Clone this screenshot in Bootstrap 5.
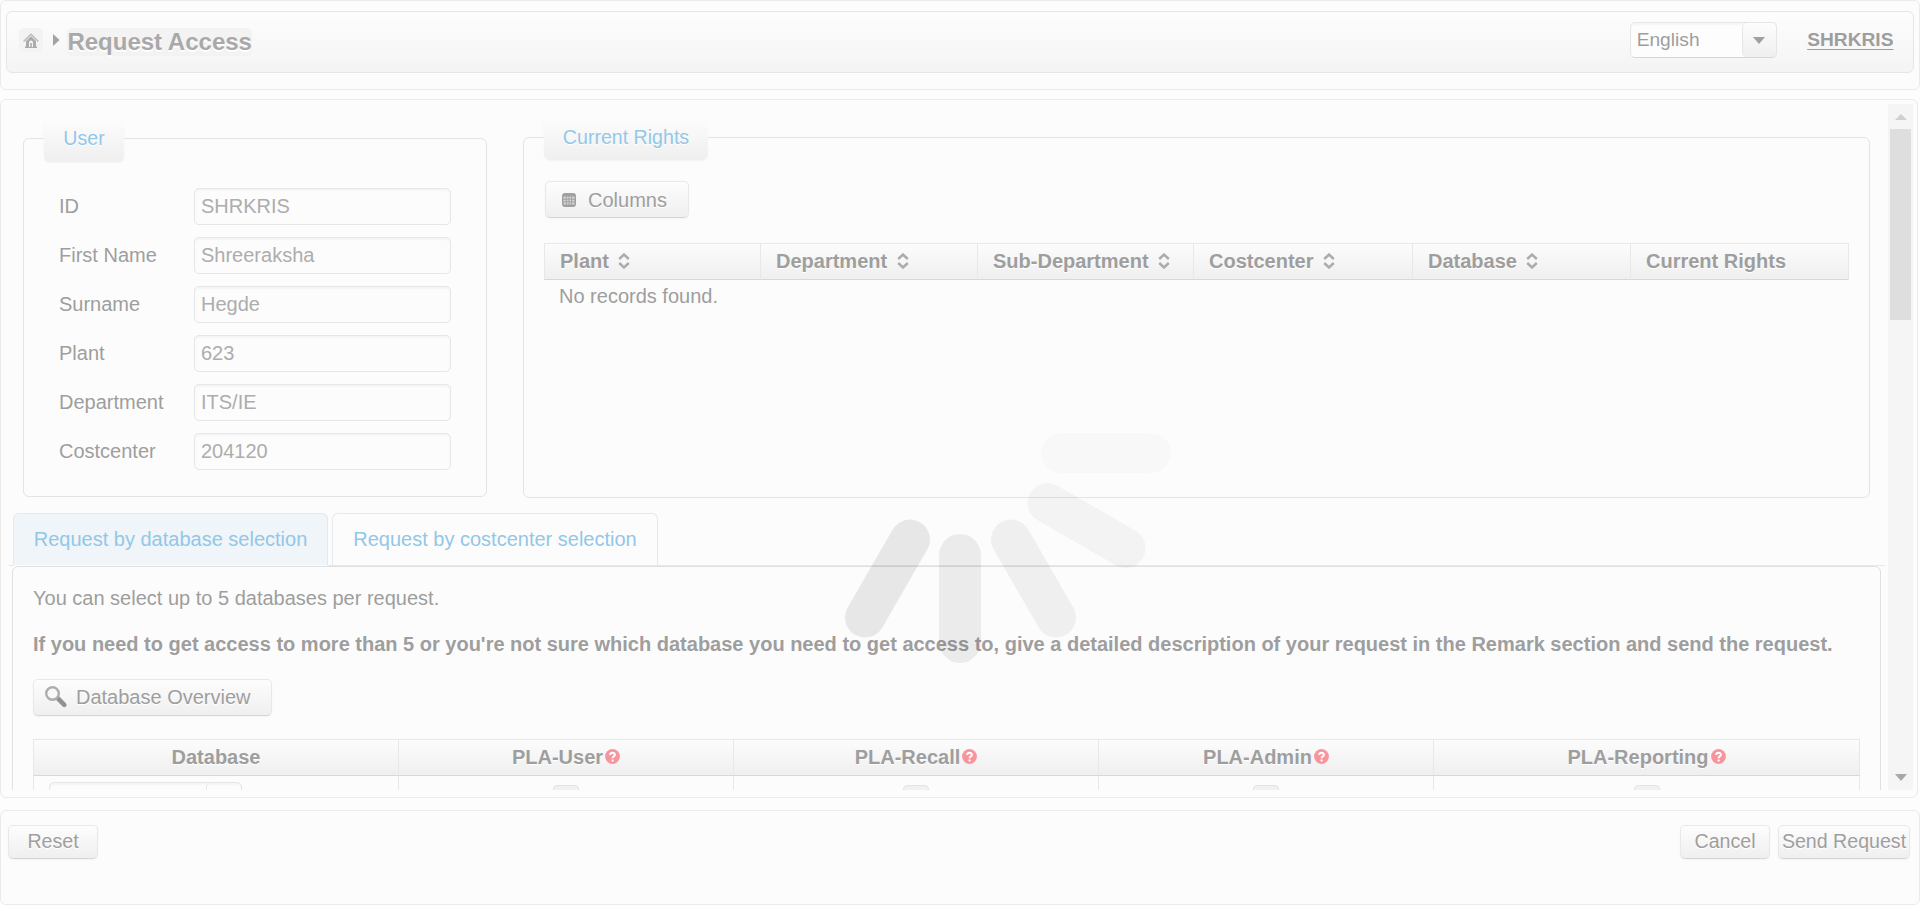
<!DOCTYPE html>
<html lang="en">
<head>
<meta charset="utf-8">
<title>Request Access</title>
<link rel="stylesheet" href="https://cdn.jsdelivr.net/npm/bootstrap@5.3.0/dist/css/bootstrap.min.css">
<style>
body{font:20px/22px "Liberation Sans",Arial,sans-serif;color:#9e9e9e;background:#fdfdfd;height:905px;overflow:hidden}
.pane{border:1px solid #ebebeb;border-radius:6px;background:#fcfcfc}
.pane-top{height:90px;padding:10px 5px 0}
.bar{height:62px;border:1px solid #e6e6e6;border-radius:6px;background:linear-gradient(#fdfdfd,#f4f4f4);padding:0 19.500px 0 12px}
.home{width:24px;height:24px;border-radius:5px;background:#f3f3f3;margin-top:16px;padding-top:2px}
.crumb-arrow{margin:22px 0 0 10px}
.title{font-size:24px;font-weight:700;line-height:28px;color:#a9a9a9;background:#f3f3f3;border-radius:5px;margin:16px 0 0 6px;padding-left:.4px;height:28px;width:185px;white-space:nowrap;text-shadow:0 2px 0 #fff}
.lang{width:147px;height:36px;border:1px solid #e6e6e6;border-bottom-color:#d6d6d6;border-radius:5px;background:#fdfdfd;margin:10px 30.500px 0 0;padding-left:6px;font-size:19.200px;box-shadow:inset 0 2px 2px #f5f5f5}
.lang-text{padding-top:6px}
.lang-btn{width:35px;margin:0 -1px 0 0;border:1px solid #e6e6e6;border-width:0 1px 0 1px;border-radius:5px;background:linear-gradient(#fdfdfd,#efefef)}
.who{color:#9e9e9e;margin-top:17px;font-size:19.200px;text-decoration-thickness:1px;text-underline-offset:3px}
.who:hover{color:#777}
.pane-mid{width:1918px;height:699px;margin-top:9px;padding:4px 4px 7px 8px}
.scroll{overflow:hidden;width:1876px}
.sb{width:25px;background:#f5f5f5;padding:10px 0 9px}
.sb-thumb{width:21px;height:191px;background:#dedede;margin-top:9px}
.boxes{height:409px;padding:33px 0 0 14px;gap:36px}
.group{border:1px solid #e4e4e4;border-radius:6px}
.group-user{width:464px;height:359px;margin-top:1px}
.group-rights{width:1347px;height:361px}
.tag{color:#92c7e8;background:linear-gradient(#fcfcfc 8%,#efefef);border-radius:0 0 6px 6px;height:45px;line-height:22px;padding-top:10px;text-align:center;font-size:19.600px;box-shadow:0 1px 2px #f3f3f3;margin-top:-22px;text-shadow:0 1px 0 #fff}
.group-user .tag{width:80px;margin-left:20px}
.group-rights .tag{width:164px;height:44px;margin-left:20px}
.fields{margin:26px 0 0 35px;gap:12px}
.fields label{width:135px;padding-bottom:2px}
.inp{width:257px;height:37px;border:1px solid #e6e6e6;border-radius:5px;padding:0 6px;font-size:20px;color:#adadad;background:#fcfcfc;box-shadow:inset 0 2px 2px #f5f5f5}
.b{border:1px solid #e8e8e8;border-bottom:1px solid #d6d6d6;border-radius:5px;background:linear-gradient(#fdfdfd,#efefef);color:#9e9e9e;font-size:20px;line-height:22px;padding:0 0 1px;white-space:nowrap;text-shadow:0 1px 0 #fff;box-shadow:0 1px 2px #f3f3f3}
.grid-t{border-collapse:separate;border-spacing:0;table-layout:fixed}
.grid-t th{height:37px;border:1px solid #e8e8e8;border-right:0;border-bottom-color:#d8d8d8;background:linear-gradient(#fcfcfc,#efefef);padding:0 0 2px;text-shadow:0 1px 0 #fff}
.grid-t th:last-child{border-right:1px solid #e8e8e8}
.b-cols{width:144px;height:37px;margin:21px 0 0 21px;padding:0 0 0 16px}
.b-cols svg{margin-top:1px}
.b-cols span{margin-left:12px}
.b-db{width:239px;height:37px;margin-top:24px;padding:0 0 1px 10px}
.b-db span{margin-left:8px}
.rights{width:1305px;margin:25px 0 0 20px}
.rights th{padding:0 0 2px 15px}
.rights td{height:28px;padding-left:15px;vertical-align:bottom}
.sort{margin:-3px 0 0 9.500px}
.tabs{height:53px;border-bottom:1px solid #e8e8e8;padding-left:4px;gap:4px}
.tab-i{height:52px;border:1px solid #e8e8e8;border-bottom:0;border-radius:6px 6px 0 0;color:#92c7e8;text-align:center;padding-top:14px}
.tab-i.on{width:315px;background:#f0f5f9;height:53px;border-bottom:1px solid #fcfcfc}
.tab-i.off{width:326px}
.panel{width:1869px;margin-left:3px;height:400px;border:1px solid #e0e0e0;border-radius:6px;padding:20px 20px}
.db{width:1827px;margin-top:23px}
.db th{text-align:center}
.db td{border-left:1px solid #e8e8e8;height:60px;vertical-align:top;padding:0}
.db td:last-child{border-right:1px solid #e8e8e8}
.pick{width:193px;height:36px;margin:6px 0 0 15px;border:1px solid #e6e6e6;border-radius:5px;box-shadow:inset 0 2px 2px #f5f5f5}
.pick span{width:35px;border:1px solid #e6e6e6;border-width:0 0 0 1px;border-radius:5px}
.chk{width:26px;height:26px;border:1px solid #e4e4e4;border-radius:4px;background:#f1f1f1;margin:9px auto 0}
.q{margin:-3px 0 0 2px}
.pane-bot{height:95px;margin-top:12px;padding:14px 9px 0 7px}
.pane-bot .b{height:34px;padding:0 0 2px;font-size:19.600px}
.w-send{width:132px;margin-left:8px}
.w-std{width:90px}
.spin{position:absolute;left:750px;top:243px;pointer-events:none}
</style>
</head>
<body class="d-flex flex-column">
<svg width="0" height="0" class="position-absolute">
  <symbol id="sort" viewBox="0 0 12 16"><path d="M1.200 6 6 1.500 10.800 6M1.200 10 6 14.500 10.800 10" fill="none" stroke="#ababab" stroke-width="2.400"/></symbol>
  <symbol id="help" viewBox="0 0 15 15"><circle cx="7.500" cy="7.500" r="7.400" fill="#f8949c"/><path d="M5.200 5.900C5.200 3 9.900 3 9.900 5.700 9.900 7.400 7.600 7.300 7.600 9.200M7.600 10.500V12.400" fill="none" stroke="#fff" stroke-width="2"/></symbol>
</svg>

<header class="pane pane-top flex-shrink-0">
  <div class="bar d-flex align-items-start">
    <span class="home d-flex align-items-center justify-content-center"><svg width="16" height="16" viewBox="0 0 16 16"><path d="M.6 8.500 8 1.300l7.400 7.200" fill="none" stroke="#bbb" stroke-width="1.600"/><path d="M3 8 8 3.300 13 8v5.500h1V15H2v-1.500h1z" fill="#ababab"/><path d="M6 14V9.500a2 2 0 0 1 4 0V14z" fill="#f3f3f3"/><path d="M7.200 14V10h1.600v4z" fill="#aaa"/></svg></span>
    <svg class="crumb-arrow" width="8" height="12"><path d="M0 0 6.500 6 0 12z" fill="#a2a2a2"/></svg>
    <div class="title">Request Access</div>
    <div class="lang d-flex ms-auto">
      <span class="lang-text flex-grow-1">English</span>
      <span class="lang-btn d-flex align-items-center justify-content-center"><svg width="12" height="7"><path d="M0 0h12L6 7z" fill="#a0a0a0"/></svg></span>
    </div>
    <a class="who fw-bold" href="#">SHRKRIS</a>
  </div>
</header>

<main class="pane pane-mid d-flex justify-content-between flex-shrink-0">
  <div class="scroll">
    <div class="boxes d-flex">
      <section class="group group-user">
        <div class="tag">User</div>
        <div class="fields d-flex flex-column">
          <div class="d-flex align-items-center"><label>ID</label><input class="inp" value="SHRKRIS"></div>
          <div class="d-flex align-items-center"><label>First Name</label><input class="inp" value="Shreeraksha"></div>
          <div class="d-flex align-items-center"><label>Surname</label><input class="inp" value="Hegde"></div>
          <div class="d-flex align-items-center"><label>Plant</label><input class="inp" value="623"></div>
          <div class="d-flex align-items-center"><label>Department</label><input class="inp" value="ITS/IE"></div>
          <div class="d-flex align-items-center"><label>Costcenter</label><input class="inp" value="204120"></div>
        </div>
      </section>
      <section class="group group-rights">
        <div class="tag">Current Rights</div>
        <button class="b b-cols d-flex align-items-center"><svg width="14" height="14" viewBox="0 0 14 14"><rect width="14" height="14" rx="3" fill="#a0a0a0"/><path d="M1.500 3.500h11v8h-11z" fill="#d6d6d6"/><path d="M4.300 3v9M7 3v9M9.700 3v9M1 6.200h12M1 8.900h12" stroke="#a0a0a0"/></svg><span>Columns</span></button>
        <table class="grid-t rights">
          <colgroup><col width="216"><col width="217"><col width="216"><col width="219"><col width="218"><col width="219"></colgroup>
          <tr><th>Plant<svg class="sort" width="12" height="16"><use href="#sort"/></svg></th><th>Department<svg class="sort" width="12" height="16"><use href="#sort"/></svg></th><th>Sub-Department<svg class="sort" width="12" height="16"><use href="#sort"/></svg></th><th>Costcenter<svg class="sort" width="12" height="16"><use href="#sort"/></svg></th><th>Database<svg class="sort" width="12" height="16"><use href="#sort"/></svg></th><th>Current Rights</th></tr>
          <tr><td colspan="6">No records found.</td></tr>
        </table>
      </section>
    </div>
    <div class="tabs d-flex">
      <div class="tab-i on">Request by database selection</div>
      <div class="tab-i off">Request by costcenter selection</div>
    </div>
    <div class="panel">
      <div>You can select up to 5 databases per request.</div>
      <div class="fw-bold text-nowrap mt-4">If you need to get access to more than 5 or you're not sure which database you need to get access to, give a detailed description of your request in the Remark section and send the request.</div>
      <button class="b b-db d-flex align-items-center"><svg width="24" height="24" viewBox="0 0 24 24"><path d="m14 13.500 6.300 6.300" stroke="#919191" stroke-width="4.600" stroke-linecap="round"/><circle cx="8.500" cy="8.500" r="6.300" fill="#f8f8f8" stroke="#adadad" stroke-width="2.400"/></svg><span>Database Overview</span></button>
      <table class="grid-t db">
        <colgroup><col width="365"><col width="335"><col width="365"><col width="335"><col width="427"></colgroup>
        <tr><th>Database</th><th>PLA-User<svg class="q" width="15" height="15"><use href="#help"/></svg></th><th>PLA-Recall<svg class="q" width="15" height="15"><use href="#help"/></svg></th><th>PLA-Admin<svg class="q" width="15" height="15"><use href="#help"/></svg></th><th>PLA-Reporting<svg class="q" width="15" height="15"><use href="#help"/></svg></th></tr>
        <tr><td><div class="pick d-flex justify-content-end"><span></span></div></td><td><div class="chk"></div></td><td><div class="chk"></div></td><td><div class="chk"></div></td><td><div class="chk"></div></td></tr>
      </table>
    </div>
  </div>
  <div class="sb d-flex flex-column align-items-center">
    <svg width="12" height="6" class="flex-shrink-0"><path d="M0 6h12L6 0z" fill="#d0d0d0"/></svg>
    <div class="sb-thumb"></div>
    <svg width="12" height="7" class="mt-auto"><path d="M0 0h12L6 7z" fill="#a8a8a8"/></svg>
  </div>
</main>

<footer class="pane pane-bot d-flex align-items-start flex-shrink-0">
  <button class="b w-std">Reset</button>
  <button class="b w-std ms-auto">Cancel</button>
  <button class="b w-send">Send Request</button>
</footer>

<svg class="spin" width="422" height="420" viewBox="-210 -210 422 420">
  <rect x="81" y="-20" width="130" height="40" rx="20" fill-opacity=".016"/>
  <rect x="80" y="-20" width="130" height="40" rx="20" fill-opacity=".036" transform="translate(1 0) rotate(30)"/>
  <rect x="80" y="-20" width="130" height="40" rx="20" fill-opacity=".052" transform="translate(1 0) rotate(60)"/>
  <rect x="81" y="-21" width="129" height="42" rx="21" fill-opacity=".066" transform="rotate(90)"/>
  <rect x="80" y="-20" width="130" height="40" rx="20" fill-opacity=".083" transform="rotate(120)"/>
</svg>
<script src="https://cdn.jsdelivr.net/npm/bootstrap@5.3.0/dist/js/bootstrap.bundle.min.js"></script>
</body>
</html>
